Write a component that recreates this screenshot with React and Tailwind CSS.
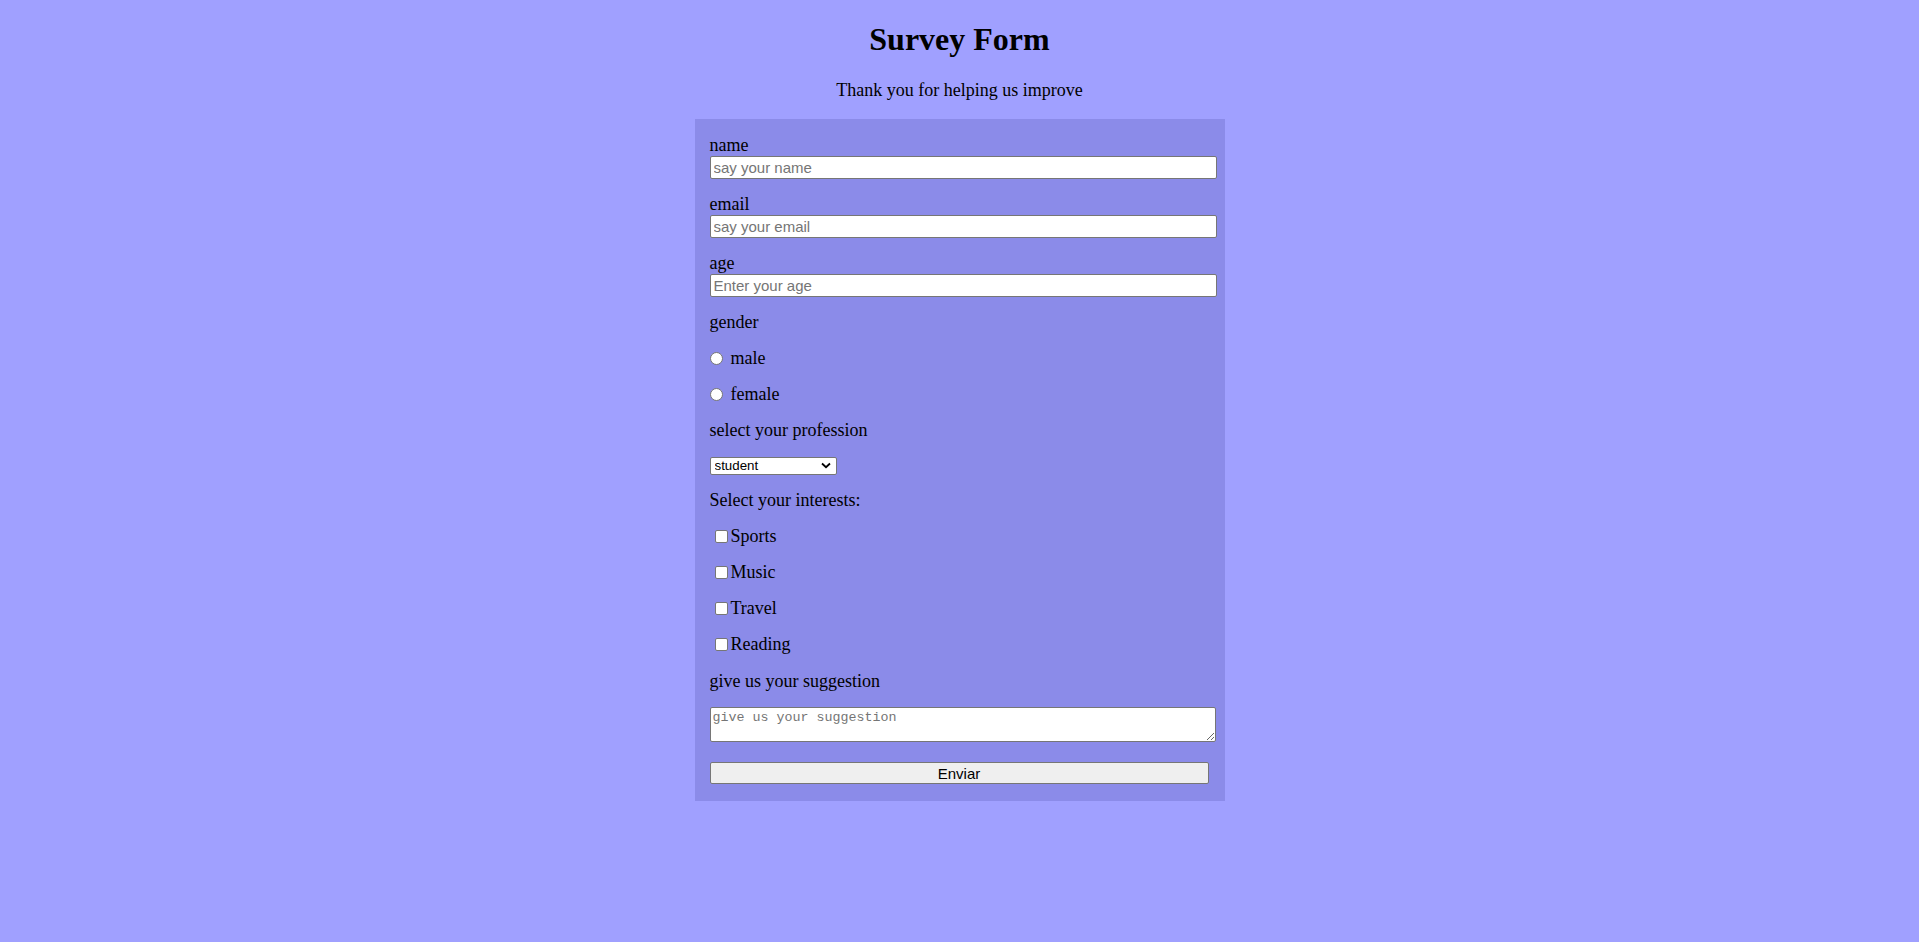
import React from "react";

function Radio({ label }) {
  return (
    <label className="mt-[15px] flex h-[21px] items-center">
      <input
        type="radio"
        name="gender"
        className="mr-[8px] h-[13px] w-[13px] appearance-none rounded-full border border-[#767676] bg-white"
      />
      <span>{label}</span>
    </label>
  );
}

function Check({ label }) {
  return (
    <label className="mt-[15px] flex h-[21px] items-center">
      <input
        type="checkbox"
        className="ml-[5px] mr-[3px] h-[13px] w-[13px] appearance-none rounded-[2px] border border-[#767676] bg-white"
      />
      <span>{label}</span>
    </label>
  );
}

function Field({ label, placeholder, type = "text" }) {
  return (
    <div className="mb-[15px]">
      <label className="block h-[21px]">{label}</label>
      <input
        type={type}
        placeholder={placeholder}
        className="block h-[23px] w-[507px] rounded-[2px] border border-[#767676] bg-white px-[3px] font-['Liberation_Sans',Arial,sans-serif] text-[15px] leading-[17px] placeholder:text-[#757575]"
      />
    </div>
  );
}

export default function App() {
  return (
    <div className="min-h-screen bg-[#a0a0ff] pt-[21px] font-['Liberation_Serif','Times_New_Roman',serif] text-black">
      <h1 className="text-center text-[32px] font-bold leading-[37px]">Survey Form</h1>
      <p className="mt-[22px] text-center text-[18px] leading-[21px]">
        Thank you for helping us improve
      </p>
      <form
        className="mx-auto mt-[18px] w-[530px] bg-[#8b8be9] px-[15px] pt-[16px] pb-[17px] text-[18px] leading-[21px]"
        onSubmit={(e) => e.preventDefault()}
      >
        <Field label="name" placeholder="say your name" />
        <Field label="email" placeholder="say your email" type="email" />
        <Field label="age" placeholder="Enter your age" type="number" />
        <div className="h-[21px]">gender</div>
        <Radio label="male" />
        <Radio label="female" />
        <div className="mt-[15px] h-[21px]">select your profession</div>
        <div className="relative mt-[16px] h-[18px] w-[127px]">
          <select className="block h-[18px] w-[127px] appearance-none rounded-[2px] border border-[#767676] bg-white pl-[4px] font-['Liberation_Sans',Arial,sans-serif] text-[13.33px] leading-[16px]">
            <option>student</option>
            <option>teacher</option>
            <option>other</option>
          </select>
          <svg
            className="pointer-events-none absolute right-[6px] top-[5px]"
            width="10"
            height="7"
            viewBox="0 0 10 7"
          >
            <path d="M1 1.5 L5 5.2 L9 1.5" fill="none" stroke="#000" strokeWidth="1.8" />
          </svg>
        </div>
        <div className="mt-[15px] h-[21px]">Select your interests:</div>
        <Check label="Sports" />
        <Check label="Music" />
        <Check label="Travel" />
        <Check label="Reading" />
        <div className="mt-[16px] h-[21px]">give us your suggestion</div>
        <textarea
          placeholder="give us your suggestion"
          className="mt-[15px] block h-[35px] w-[506px] rounded-[2px] border border-[#767676] bg-white px-[2px] py-[2px] font-['Liberation_Mono','DejaVu_Sans_Mono',monospace] text-[13.33px] leading-[15px] placeholder:text-[#757575]"
        />
        <button
          type="submit"
          className="mt-[20px] block h-[22px] w-[499px] rounded-[2px] border border-[#767676] bg-[#efefef] font-['Liberation_Sans',Arial,sans-serif] text-[15px] leading-[17px]"
        >
          Enviar
        </button>
      </form>
    </div>
  );
}
